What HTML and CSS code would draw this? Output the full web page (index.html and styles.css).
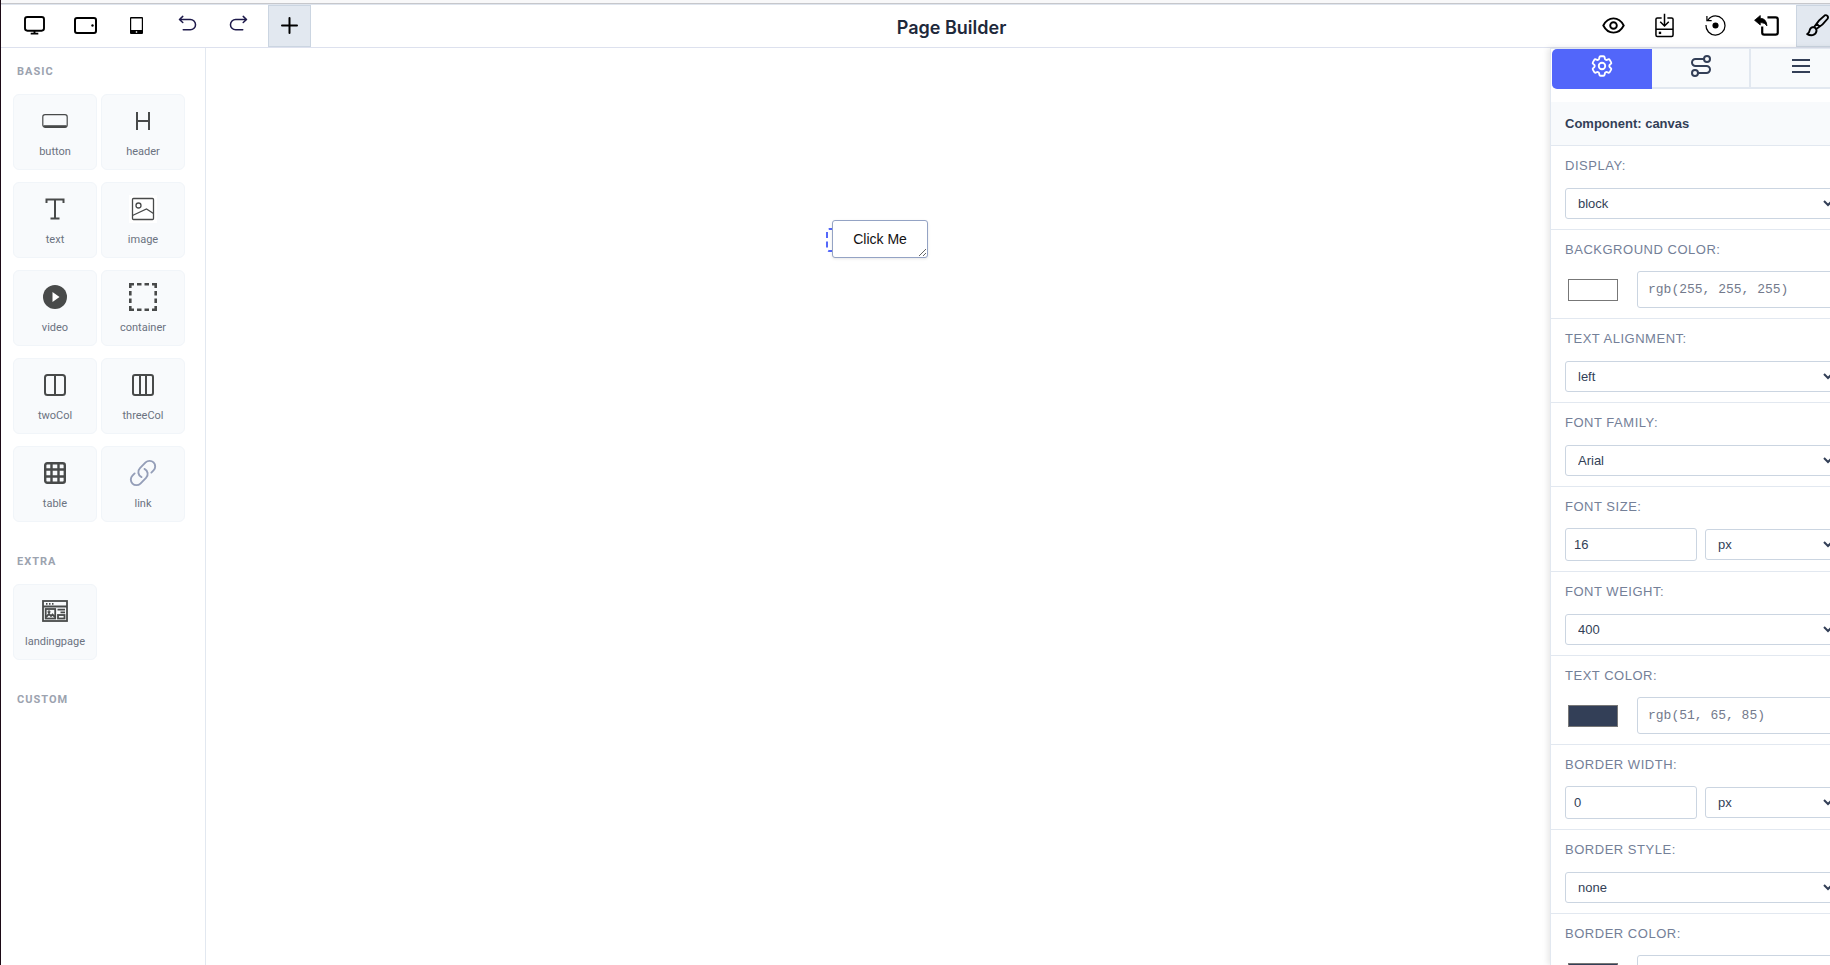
FILE: index.html
```html
<!DOCTYPE html>
<html lang="en">
<head>
<meta charset="utf-8">
<title>Page Builder</title>
<link rel="stylesheet" href="styles.css">
</head>
<body>
<div class="builder">
  <header class="toolbar">
    <div class="tool-group">
      <button class="tool" aria-label="Desktop"><svg width="21" height="19" viewBox="0 0 22 20" fill="none" stroke="#000" stroke-width="2"><rect x="1" y="1" width="20" height="14.500" rx="2.500"/><path d="M11 15v3M7 18.500h8"/></svg></button>
      <button class="tool" aria-label="Tablet"><svg width="23" height="17" viewBox="0 0 23 17" fill="none" stroke="#000" stroke-width="2"><rect x="1" y="1" width="21" height="15" rx="2"/><circle cx="18.500" cy="8.500" r="1.200" fill="#000" stroke="none"/></svg></button>
      <button class="tool" aria-label="Mobile"><svg width="13" height="17" viewBox="0 0 13 17"><path fill-rule="evenodd" d="M1 0h11q1 0 1 1v15q0 1-1 1H1q-1 0-1-1V1q0-1 1-1zM1.200 1.500V13h10.600V1.500zM5.800 14.300v1.400h1.400v-1.400z"/></svg></button>
      <button class="tool history" aria-label="Undo"><svg width="19" height="17" viewBox="0 0 20 18" fill="none" stroke="currentColor" stroke-width="1.600" stroke-linecap="round" stroke-linejoin="round"><path d="M5 1.500 1.500 4.700 5 8M1.800 4.700H13a5.300 5.300 0 0 1 0 11H5.500"/></svg></button>
      <button class="tool history" aria-label="Redo"><svg width="19" height="17" viewBox="0 0 20 18" fill="none" stroke="currentColor" stroke-width="1.600" stroke-linecap="round" stroke-linejoin="round"><path d="M15 1.500 18.500 4.700 15 8M18.200 4.700H7a5.300 5.300 0 0 0 0 11h7.500"/></svg></button>
      <button class="tool active" aria-label="Add block"><svg width="17" height="17" viewBox="0 0 17 17" stroke="#000" stroke-width="2" stroke-linecap="round"><path d="M8.500 1v15M1 8.500h15"/></svg></button>
    </div>
    <h1 class="title">Page Builder</h1>
    <div class="tool-group">
      <button class="tool" aria-label="Preview"><svg width="23" height="17" viewBox="0 0 24 18" fill="none" stroke="#000" stroke-width="2"><path d="M1.200 9C3.500 4.500 7.300 1.500 12 1.500S20.500 4.500 22.800 9C20.500 13.500 16.700 16.500 12 16.500S3.500 13.500 1.200 9z"/><circle cx="12" cy="9" r="3.500"/></svg></button>
      <button class="tool" aria-label="Save"><svg width="19" height="25" viewBox="0 0 20 26" fill="none" stroke="#000" stroke-width="1.600"><path d="M7 5H2.500Q1 5 1 6.500v16.500Q1 24.500 2.500 24.500h15Q19 24.500 19 23V6.500Q19 5 17.500 5H13M1 17h18M10 .5v13M5.500 9l4.500 4.500L14.500 9"/><rect x="4" y="19.500" width="2.500" height="2.500" fill="#000" stroke="none"/></svg></button>
      <button class="tool" aria-label="Reset"><svg width="21" height="21" viewBox="0 0 22 22" fill="none" stroke="#000" stroke-width="1.300"><path d="M1 10.500A10 10 0 1 0 11 1Q6 1 3 5.500M2 1v5h5"/><circle cx="11" cy="11" r="3.200" fill="#000" stroke="none"/></svg></button>
      <button class="tool" aria-label="Exit"><svg width="25" height="21" viewBox="0 0 26 22" fill="none" stroke="#000" stroke-width="2"><path d="M14 2.500h8.500Q24.800 2.500 24.800 4.500v14Q24.800 20.500 22.500 20.500h-12Q8.500 20.500 8.500 18.500v-6.500" stroke-width="2.300"/><path d="M.5 5.500 6.500.500V3.500Q13 3.500 13.500 11.500 11.500 7.800 6.500 7.800V10.500z" fill="#000" stroke="#000" stroke-width=".8"/></svg></button>
      <button class="tool active" aria-label="Styles"><svg width="23" height="23" viewBox="0 0 24 24" fill="none" stroke="#000" stroke-width="2" stroke-linejoin="round"><path d="M8.500 13.500C11 9.500 16 4 19.500 1.500Q21 .7 22.300 2 23.500 3.300 22.500 5C20 8.500 14.500 13.500 10.800 15.700zM11.500 10.500l3 3M8.500 13.500Q5 13.300 4 16.500 3.500 19.500 1.300 21 4 22.500 7 22 10.500 21 11 17.500 11 16 8.500 13.500z"/></svg></button>
    </div>
  </header>

  <main class="workspace">
    <aside class="blocks">
      <section class="block-section">
        <h2 class="block-heading">BASIC</h2>
        <div class="block-grid">
          <button class="block"><span class="block-icon"><svg width="26" height="14" viewBox="0 0 26 14" fill="none" stroke="currentColor"><rect x=".8" y=".7" width="24.400" height="12.600" rx="2.200" stroke-width="1.200"/><path d="M1.500 12.200h23" stroke-width="2"/></svg></span>button</button>
          <button class="block"><span class="block-icon"><svg width="14" height="18" viewBox="0 0 14 18" fill="none" stroke="currentColor" stroke-width="2"><path d="M1 0v18M13 0v18M1 9h12"/></svg></span>header</button>
          <button class="block"><span class="block-icon"><svg width="20" height="22" viewBox="0 0 20 22" fill="none" stroke="currentColor" stroke-width="2"><path d="M1.500 5V1.500h17V5M10 1.500v19M5.500 20.500h9"/></svg></span>text</button>
          <button class="block"><span class="block-icon"><svg width="28" height="28" viewBox="0 0 28 28" fill="none" stroke="currentColor" stroke-width="1.300"><path d="M0 0h28v28H0z" fill="#fff" stroke="none"/><rect x="3.500" y="3.500" width="21" height="21" rx="1"/><circle cx="9.500" cy="10.500" r="2.500"/><path d="M3.500 20.500 17.500 14l7 4.500"/></svg></span>image</button>
          <button class="block"><span class="block-icon"><svg width="24" height="24" viewBox="0 0 24 24"><circle cx="12" cy="12" r="12" fill="currentColor"/><path d="M9.500 7v10l7-5z" fill="#fff"/></svg></span>video</button>
          <button class="block"><span class="block-icon"><svg width="28" height="28" viewBox="0 0 28 28" fill="none" stroke="currentColor" stroke-width="2.600"><path d="M1.300 5V1.300H5M8 1.300h4.500M15.500 1.300H20M23 1.300h3.700V5M26.700 8v4.500M26.700 15.500V20M26.700 23v3.700H23M20 26.700h-4.500M12.500 26.700H8M5 26.700H1.300V23M1.300 20v-4.500M1.300 12.500V8"/></svg></span>container</button>
          <button class="block"><span class="block-icon"><svg width="22" height="22" viewBox="0 0 22 22" fill="none" stroke="currentColor" stroke-width="2"><rect x="1" y="1" width="20" height="20" rx="2.500"/><path d="M11 1v20"/></svg></span>twoCol</button>
          <button class="block"><span class="block-icon"><svg width="22" height="22" viewBox="0 0 22 22" fill="none" stroke="currentColor" stroke-width="2"><rect x="1" y="1" width="20" height="20" rx="2"/><path d="M8 1v20M14 1v20"/></svg></span>threeCol</button>
          <button class="block"><span class="block-icon"><svg width="22" height="22" viewBox="0 0 22 22" fill="none" stroke="currentColor" stroke-width="2.400"><rect x="1.200" y="1.200" width="19.600" height="19.600" rx="2"/><path d="M7.500 1v20M14.500 1v20M1 7.500h20M1 14.500h20"/></svg></span>table</button>
          <button class="block"><span class="block-icon link-icon"><svg width="30" height="30" viewBox="0 0 24 24" fill="none" stroke="currentColor" stroke-width="1.500" stroke-linecap="round" stroke-linejoin="round"><path d="M13.190 8.688a4.500 4.500 0 0 1 1.242 7.244l-4.500 4.500a4.500 4.500 0 0 1-6.364-6.364l1.757-1.757m13.350-.622 1.757-1.757a4.500 4.500 0 0 0-6.364-6.364l-4.500 4.500a4.500 4.500 0 0 0 1.242 7.244"/></svg></span>link</button>
        </div>
      </section>
      <section class="block-section">
        <h2 class="block-heading">EXTRA</h2>
        <div class="block-grid">
          <button class="block"><span class="block-icon"><svg width="26" height="22" viewBox="0 0 26 22" fill="none" stroke="currentColor" stroke-width="1.800"><rect x="1" y="1" width="24" height="20"/><path d="M1 6.500h24M4 3.800h1.500M7 3.800h1.500M10 3.800h1.500"/><rect x="3.700" y="9" width="9.500" height="9.500"/><path d="m4 17 3-3 2 2 1.500-1.500L13 17M15.500 9.700H23M18.500 12.300H23"/><rect x="16" y="15" width="6.500" height="3.500"/><circle cx="7" cy="11.700" r=".6"/></svg></span>landingpage</button>
        </div>
      </section>
      <section class="block-section">
        <h2 class="block-heading">CUSTOM</h2>
      </section>
    </aside>

    <div class="canvas">
      <div class="dropped">
        <span class="selection"></span>
        <button class="canvas-button">Click Me</button>
      </div>
    </div>

    <aside class="inspector">
      <nav class="tabs" aria-label="Panels">
        <button class="tab current" aria-label="Settings"><svg width="26" height="26" viewBox="0 0 24 24" fill="none" stroke="currentColor" stroke-width="1.700" stroke-linejoin="round"><path d="M9.594 3.940c.09-.542.56-.94 1.110-.94h2.593c.55 0 1.020.398 1.110.940l.213 1.281c.063.374.313.686.645.870.074.040.147.083.220.127.325.196.720.257 1.075.124l1.217-.456a1.125 1.125 0 0 1 1.370.490l1.296 2.247a1.125 1.125 0 0 1-.260 1.431l-1.003.827c-.293.241-.438.613-.430.992a7.723 7.723 0 0 1 0 .255c-.008.378.137.750.430.991l1.004.827c.424.350.534.955.260 1.430l-1.298 2.247a1.125 1.125 0 0 1-1.369.491l-1.217-.456c-.355-.133-.750-.072-1.076.124a6.470 6.470 0 0 1-.220.128c-.331.183-.581.495-.644.869l-.213 1.281c-.090.543-.560.940-1.110.940h-2.594c-.550 0-1.019-.398-1.110-.940l-.213-1.281c-.062-.374-.312-.686-.644-.870a6.520 6.520 0 0 1-.220-.127c-.325-.196-.720-.257-1.076-.124l-1.217.456a1.125 1.125 0 0 1-1.369-.490l-1.297-2.247a1.125 1.125 0 0 1 .260-1.431l1.004-.827c.292-.240.437-.613.430-.991a6.932 6.932 0 0 1 0-.255c.007-.380-.138-.751-.430-.992l-1.004-.827a1.125 1.125 0 0 1-.260-1.430l1.297-2.247a1.125 1.125 0 0 1 1.370-.491l1.216.456c.356.133.751.072 1.076-.124.072-.044.146-.086.220-.128.332-.183.582-.495.644-.869z"/><circle cx="12" cy="12" r="3"/></svg></button>
        <button class="tab" aria-label="Traits"><svg width="22" height="22" viewBox="0 0 22 22" fill="none" stroke="currentColor" stroke-width="2"><circle cx="17" cy="4" r="3"/><circle cx="5" cy="18" r="3"/><path d="M14 4H5.500a3.500 3.500 0 0 0 0 7h11a3.500 3.500 0 0 1 0 7H8"/></svg></button>
        <button class="tab" aria-label="Layers"><svg width="18" height="16" viewBox="0 0 18 16" stroke="currentColor" stroke-width="2"><path d="M0 2h18M0 8h18M0 14h18"/></svg></button>
      </nav>
      <h2 class="component-name">Component: canvas</h2>
      <form class="fields">
        <div class="field"><label for="display">DISPLAY:</label><div class="controls"><select id="display"><option>block</option></select></div></div>
        <div class="field tint"><label for="bg">BACKGROUND COLOR:</label><div class="controls"><input type="color" value="#ffffff" aria-label="Pick background color"><input class="code" id="bg" type="text" value="rgb(255, 255, 255)"></div></div>
        <div class="field"><label for="align">TEXT ALIGNMENT:</label><div class="controls"><select id="align"><option>left</option></select></div></div>
        <div class="field"><label for="family">FONT FAMILY:</label><div class="controls"><select id="family"><option>Arial</option></select></div></div>
        <div class="field measure"><label for="size">FONT SIZE:</label><div class="controls"><input class="amount" id="size" type="text" value="16"><select aria-label="Font size unit"><option>px</option></select></div></div>
        <div class="field"><label for="weight">FONT WEIGHT:</label><div class="controls"><select id="weight"><option>400</option></select></div></div>
        <div class="field tint"><label for="color">TEXT COLOR:</label><div class="controls"><input type="color" value="#333f57" aria-label="Pick text color"><input class="code" id="color" type="text" value="rgb(51, 65, 85)"></div></div>
        <div class="field measure"><label for="bwidth">BORDER WIDTH:</label><div class="controls"><input class="amount" id="bwidth" type="text" value="0"><select aria-label="Border width unit"><option>px</option></select></div></div>
        <div class="field"><label for="bstyle">BORDER STYLE:</label><div class="controls"><select id="bstyle"><option>none</option></select></div></div>
        <div class="field tint"><label for="bcolor">BORDER COLOR:</label><div class="controls"><input type="color" value="#333f57" aria-label="Pick border color"><input class="code" id="bcolor" type="text" value="rgb(51, 65, 85)"></div></div>
      </form>
    </aside>
  </main>
</div>
</body>
</html>
```
FILE: styles.css
```css
* { box-sizing: border-box; }

body {
  margin: 0;
  height: 100vh;
  overflow: hidden;
  padding-top: 3px;
  border-left: 1px solid #1c0a16;
  background: #f8f8f9;
  color: #333f57;
  font-family: Inter, sans-serif;
}

button { font: inherit; color: inherit; cursor: pointer; }

svg { display: block; flex: none; }

/* The builder runs 21px past the right edge of the window. */
.builder {
  display: flex;
  flex-direction: column;
  width: calc(100% + 21px);
  height: 100%;
  border-top: 1px solid #c6c7cb;
  background: #fff;
}

.toolbar {
  display: flex;
  flex: none;
  align-items: center;
  justify-content: space-between;
  padding: 0 12px;
  border-top: 1px solid #dfe5ee;
  border-bottom: 1px solid #dde1ee;
}

.tool-group { display: flex; gap: 8px; }

.tool {
  display: flex;
  align-items: center;
  justify-content: center;
  width: 43px;
  height: 42px;
  padding: 0 0 1px;
  border: 1px solid transparent;
  background: none;
}

.tool.history { color: #1e1a4b; padding-bottom: 5px; }

.tool.active { background: #e2e8f0; border-color: #cbd5e1; }

.title {
  margin: 0;
  padding-top: 3px;
  color: #1e293b;
  font-size: 18px;
  font-weight: 600;
  line-height: 24px;
}

.workspace { display: flex; flex: 1; min-height: 0; }

.blocks {
  flex: none;
  width: 205px;
  padding: 16px 12px;
  border-right: 1px solid #e2e8f0;
  font-family: Roboto, sans-serif;
}

.block-section { margin-bottom: 32px; }

.block-heading {
  margin: 0 0 14px;
  padding-left: 4px;
  color: #9ca3af;
  font-size: 11px;
  font-weight: 700;
  line-height: 16px;
  letter-spacing: 1px;
}

.block-grid {
  display: grid;
  grid-template-columns: 84px 84px;
  gap: 12px 4px;
}

.block {
  display: flex;
  flex-direction: column;
  align-items: center;
  height: 76px;
  padding: 12px 0 0;
  border: 1px solid #f1f5f9;
  border-radius: 6px;
  background: #f8fafc;
  color: #6b7280;
  font-size: 11px;
  font-weight: 400;
  line-height: 16px;
}

.block-icon {
  display: flex;
  align-items: center;
  justify-content: center;
  height: 28px;
  margin-bottom: 9px;
  color: #484a4a;
}

.block-icon.link-icon { color: #949eb8; }

.canvas { flex: 1; padding: 172px 0 0 4px; }

.dropped {
  position: relative;
  width: 96px;
  margin: 0 auto;
}

.selection {
  position: absolute;
  left: -6px;
  top: 8px;
  width: 30px;
  height: 24px;
  border: 2px dashed #5468fa;
  border-radius: 3px;
}

.canvas-button {
  position: relative;
  display: block;
  width: 96px;
  height: 38px;
  padding: 0;
  overflow: auto;
  resize: both;
  border: 1px solid #94a3c4;
  border-radius: 3px;
  background: #fff;
  box-shadow: 0 1px 3px #0000001a;
  color: #111;
  font-family: "Liberation Sans", Arial, sans-serif;
  font-size: 14px;
}

.inspector {
  flex: none;
  width: 301px;
  overflow: hidden;
  border-left: 1px solid #e2e8f0;
  box-shadow: -2px 0 6px #0000001a;
  font-family: "Liberation Sans", Arial, sans-serif;
}

.tabs {
  display: grid;
  grid-template-columns: repeat(3, 1fr);
  margin-bottom: 13px;
  padding-left: 1px;
  border-top: 1px solid #e2e8f0;
}

.tab {
  display: flex;
  align-items: center;
  justify-content: center;
  height: 40px;
  padding: 0 0 5px 2px;
  border: solid #e2e8f0;
  border-width: 0 2px 2px 0;
  background: #f8fafc;
}

.tab.current {
  padding-left: 0;
  border-color: #5266fa;
  border-right-width: 0;
  border-radius: 5px 0 0 5px;
  background: #5266fa;
  color: #fff;
}

.component-name {
  margin: 0;
  padding: 12px 14px 11px;
  border-bottom: 1px solid #e2e8f0;
  background: #f8fafc;
  font-size: 13px;
  line-height: 20px;
}

.field {
  padding: 10px 14px;
  border-bottom: 1px solid #e2e8f0;
}

.field label {
  display: block;
  margin-bottom: 12px;
  color: #748098;
  font-size: 13px;
  line-height: 20px;
  letter-spacing: 0.04em;
}

.field.tint label,
.field.measure label { margin-bottom: 11px; }

.controls {
  display: grid;
  align-items: center;
  gap: 8px;
}

.measure .controls { grid-template-columns: 1fr 1fr; }

.tint .controls { grid-template-columns: 56px 1fr; gap: 16px; }

.field select,
.field input[type="text"] {
  width: 100%;
  min-width: 0;
  border: 1px solid #cbd5e1;
  border-radius: 3px;
  background: #fff;
  color: #333f57;
  font: 13px "Liberation Sans", Arial, sans-serif;
}

.field select { height: 31px; padding: 0 8px; }

.field input.amount { height: 33px; padding: 0 8px; }

.field input.code {
  height: 37px;
  padding: 0 10px;
  color: #737a8c;
  font-family: "Liberation Mono", monospace;
}

.field input[type="color"] {
  width: 56px;
  height: 32px;
  padding: 1px;
  border: 0;
  background: none;
}
```
